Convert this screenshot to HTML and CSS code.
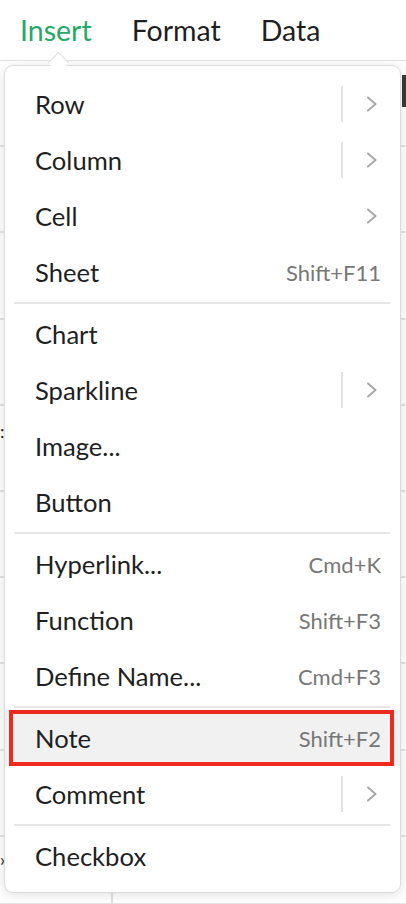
FILE: index.html
```html
<!DOCTYPE html>
<html lang="en">
<head>
<meta charset="utf-8">
<title>Insert menu</title>
<link rel="stylesheet" href="styles.css">
</head>
<body>
<div class="app">
  <nav class="tabs">
    <span class="tab active">Insert</span>
    <span class="tab">Format</span>
    <span class="tab">Data</span>
  </nav>
  <div class="sheet">
    <span class="edge-mark"></span>
    <span class="cell-frag frag-a">:</span>
    <span class="cell-frag frag-b">›</span>
    <span class="col-line"></span>
  </div>

  <div class="menu">
    <ul class="group">
      <li class="item"><span class="label">Row</span><span class="divider"></span><svg class="chev" viewBox="0 0 12 16"><path d="M2 1.5 L9.5 8 L2 14.5"/></svg></li>
      <li class="item"><span class="label">Column</span><span class="divider"></span><svg class="chev" viewBox="0 0 12 16"><path d="M2 1.5 L9.5 8 L2 14.5"/></svg></li>
      <li class="item"><span class="label">Cell</span><svg class="chev" viewBox="0 0 12 16"><path d="M2 1.5 L9.5 8 L2 14.5"/></svg></li>
      <li class="item"><span class="label">Sheet</span><span class="key">Shift+F11</span></li>
    </ul>
    <ul class="group">
      <li class="item"><span class="label">Chart</span></li>
      <li class="item"><span class="label">Sparkline</span><span class="divider"></span><svg class="chev" viewBox="0 0 12 16"><path d="M2 1.5 L9.5 8 L2 14.5"/></svg></li>
      <li class="item"><span class="label">Image...</span></li>
      <li class="item"><span class="label">Button</span></li>
    </ul>
    <ul class="group">
      <li class="item"><span class="label">Hyperlink...</span><span class="key">Cmd+K</span></li>
      <li class="item"><span class="label">Function</span><span class="key">Shift+F3</span></li>
      <li class="item"><span class="label">Define Name...</span><span class="key">Cmd+F3</span></li>
    </ul>
    <ul class="group">
      <li class="item selected"><span class="label">Note</span><span class="key">Shift+F2</span></li>
      <li class="item"><span class="label">Comment</span><span class="divider"></span><svg class="chev" viewBox="0 0 12 16"><path d="M2 1.5 L9.5 8 L2 14.5"/></svg></li>
    </ul>
    <ul class="group">
      <li class="item"><span class="label">Checkbox</span></li>
    </ul>
  </div>
</div>
</body>
</html>
```

FILE: styles.css
```css
* { box-sizing: border-box; }

html, body {
  margin: 0;
  padding: 0;
  background: #ffffff;
}

body {
  font-family: Lato, "Noto Sans", "Liberation Sans", sans-serif;
  color: #222222;
}

.app {
  position: relative;
  width: 406px;
  height: 904px;
  overflow: hidden;
  display: flex;
  flex-direction: column;
}

.tabs {
  display: flex;
  align-items: center;
  gap: 40px;
  height: 60px;
  padding: 0 0 0 20px;
  background: #ffffff;
}

.tab {
  font-size: 28.5px;
  color: #1f1f1f;
  line-height: 1;
}

.tab.active {
  color: #27a866;
}

.sheet {
  position: relative;
  flex: 1;
  background-color: #ffffff;
  background-image: repeating-linear-gradient(
    to bottom,
    transparent 0,
    transparent 1px,
    #e4e4e4 1px,
    #e4e4e4 3px,
    transparent 3px,
    transparent 86.2px
  );
  background-position: 0 -2px;
}

.edge-mark {
  position: absolute;
  right: 0;
  top: 15px;
  width: 4px;
  height: 32px;
  background: #3a3a3a;
}

.cell-frag {
  position: absolute;
  left: 0;
  font-size: 18px;
  line-height: 1;
  color: #222;
}

.frag-a { top: 362px; }
.frag-b { top: 790px; }

.col-line {
  position: absolute;
  left: 111px;
  bottom: 0;
  width: 2px;
  height: 12px;
  background: #e0e0e0;
}

.menu {
  position: absolute;
  left: 4px;
  top: 65px;
  width: 397px;
  padding: 10px 0 8px;
  background: #ffffff;
  border: 1px solid #dcdcdc;
  border-radius: 9px;
  box-shadow: 0 2px 12px rgba(0, 0, 0, 0.12);
}

.menu::before {
  content: "";
  position: absolute;
  left: 46px;
  top: -11px;
  width: 14px;
  height: 14px;
  background: #ffffff;
  border-top: 1px solid #dcdcdc;
  border-left: 1px solid #dcdcdc;
  transform: rotate(45deg);
}

.group {
  list-style: none;
  margin: 0;
  padding: 0;
}

.group + .group {
  margin-top: 6px;
  position: relative;
}

.group + .group::before {
  content: "";
  position: absolute;
  left: 9px;
  right: 10px;
  top: -4px;
  height: 2px;
  background: #e6e6e6;
}

.item {
  position: relative;
  display: flex;
  align-items: center;
  height: 56px;
  padding: 0 19px 0 30px;
}

.label {
  flex: 1;
  font-size: 25.6px;
  color: #1f1f1f;
}

.key {
  font-size: 22px;
  color: #777777;
}

.divider {
  width: 2px;
  height: 36px;
  background: #e2e2e2;
  margin-right: 23px;
}

.chev {
  width: 12px;
  height: 16px;
  margin-right: 3px;
  fill: none;
  stroke: #a8a8a8;
  stroke-width: 2;
  stroke-linecap: round;
  stroke-linejoin: round;
}

.item.selected {
  background: #f1f1f1;
}

.item.selected::after {
  content: "";
  position: absolute;
  left: 4px;
  right: 6px;
  top: 0;
  bottom: 0;
  border: 4px solid #ee2a1f;
}
```
